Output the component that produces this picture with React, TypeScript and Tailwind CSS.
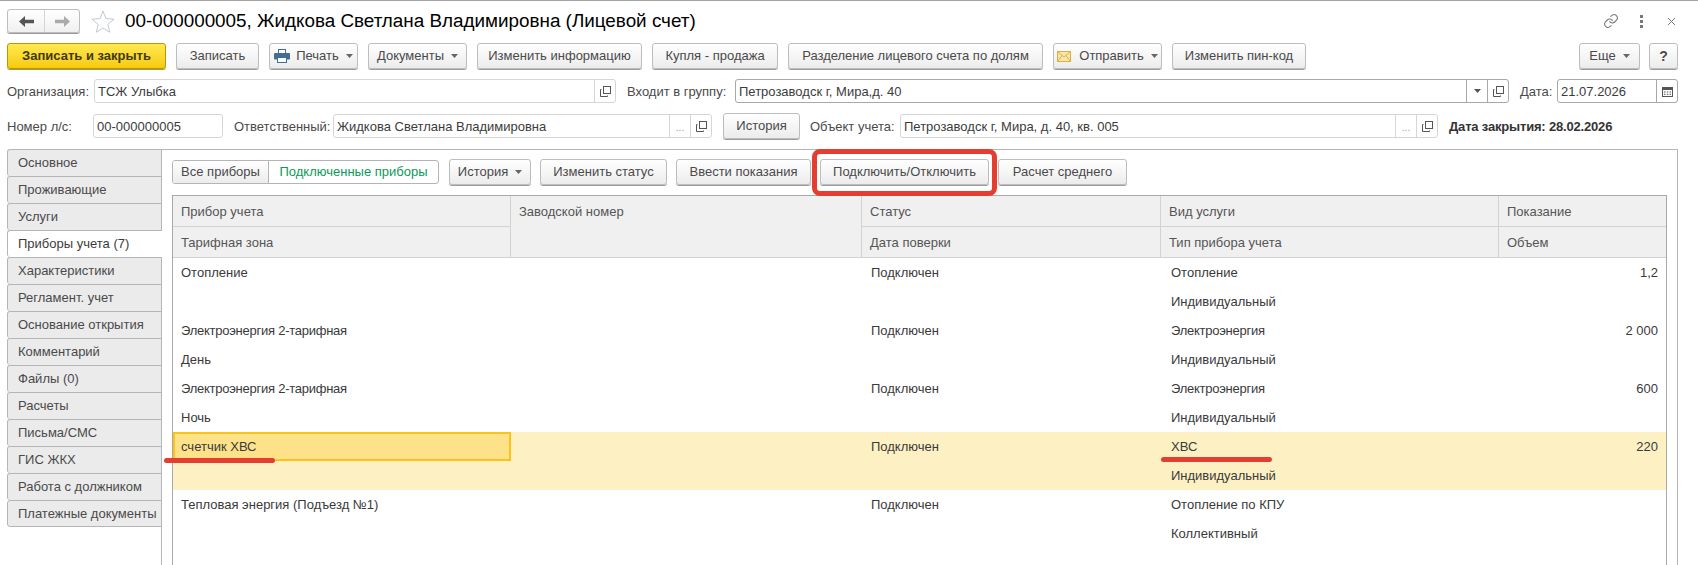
import type { ReactNode } from "react";

const TABS = [
  "Основное",
  "Проживающие",
  "Услуги",
  "Приборы учета (7)",
  "Характеристики",
  "Регламент. учет",
  "Основание открытия",
  "Комментарий",
  "Файлы (0)",
  "Расчеты",
  "Письма/СМС",
  "ГИС ЖКХ",
  "Работа с должником",
  "Платежные документы",
];

const ROWS = [
  { name: "Отопление", zone: "", status: "Подключен", service: "Отопление", type: "Индивидуальный", value: "1,2" },
  { name: "Электроэнергия 2-тарифная", zone: "День", status: "Подключен", service: "Электроэнергия", type: "Индивидуальный", value: "2 000" },
  { name: "Электроэнергия 2-тарифная", zone: "Ночь", status: "Подключен", service: "Электроэнергия", type: "Индивидуальный", value: "600" },
  { name: "счетчик ХВС", zone: "", status: "Подключен", service: "ХВС", type: "Индивидуальный", value: "220", selected: true },
  { name: "Тепловая энергия (Подъезд №1)", zone: "", status: "Подключен", service: "Отопление по КПУ", type: "Коллективный", value: "" },
];

const COLS = "grid grid-cols-[338px_351px_299px_338px_167px]";

function Caret() {
  return (
    <svg width="7" height="4" viewBox="0 0 7 4" className="ml-[7px] shrink-0">
      <path d="M0 0h7L3.5 4z" fill="#666" />
    </svg>
  );
}

function OpenIcon() {
  return (
    <svg width="11" height="11" viewBox="0 0 11 11" fill="none" stroke="#555">
      <rect x="3.5" y="0.5" width="7" height="7" fill="#fff" />
      <path d="M1.5 3.5h-1v7h7v-1" />
    </svg>
  );
}

function Btn({ w, children, className = "" }: { w: string; children: ReactNode; className?: string }) {
  return (
    <button
      className={`${w} h-[26px] shrink-0 flex items-center justify-center rounded-[3px] border border-[#bdbdbd] bg-gradient-to-b from-white to-[#ececec] text-[#4a4a4a] shadow-[0_1px_0_#9c9c9c] ${className}`}
    >
      {children}
    </button>
  );
}

function Field({
  w,
  value,
  dark,
  cells = [],
}: {
  w: string;
  value: string;
  dark?: boolean;
  cells?: ReactNode[];
}) {
  const border = dark ? "border-[#a8a8a8]" : "border-[#d6d6d6]";
  return (
    <div className={`${w} h-[24px] shrink-0 flex items-center rounded-[3px] border bg-white ${border}`}>
      <span className="flex-1 pl-[3px] pt-px text-[#3c3c3c] truncate">{value}</span>
      {cells.map((cell, i) => (
        <span key={i} className={`w-[21px] h-full flex items-center justify-center border-l ${border}`}>
          {cell}
        </span>
      ))}
    </div>
  );
}

const dots = <span className="text-[10px] text-[#999] leading-none pt-[4px]">...</span>;

export default function App() {
  return (
    <div
      className="relative w-[1698px] h-[565px] overflow-hidden bg-white border-t border-[#a3a3a3] text-[13px] text-[#4a4a4a]"
      style={{ fontFamily: '"Liberation Sans", Arial, sans-serif' }}
    >
      {/* title */}
      <div className="h-[40px] mb-[2px] pl-[7px] pr-[22px] flex items-center">
        <div className="w-[73px] h-[24px] flex rounded-[3px] border border-[#bdbdbd] bg-gradient-to-b from-white to-[#f0f0f0] shadow-[0_1px_0_#9c9c9c]">
          <span className="w-[37px] flex items-center justify-center border-r border-[#d5d5d5]">
            <svg width="15" height="11" viewBox="0 0 15 11">
              <path d="M0 5.5 6 0v3.8h9v3.4H6V11z" fill="#555" />
            </svg>
          </span>
          <span className="flex-1 flex items-center justify-center">
            <svg width="15" height="11" viewBox="0 0 15 11">
              <path d="M15 5.5 9 0v3.8H0v3.4h9V11z" fill="#aaa" />
            </svg>
          </span>
        </div>
        <svg width="24" height="23" viewBox="0 0 24 23" className="ml-[11px]" fill="#fff" stroke="#c4c8cc">
          <path d="M12 1l3 7.6 8 .6-6.2 5.2 2 7.9L12 18l-6.800 4.300 2-7.900L1 9.200l8-.6z" />
        </svg>
        <h1 className="ml-[10px] text-[18.85px] leading-none text-black">
          00-000000005, Жидкова Светлана Владимировна (Лицевой счет)
        </h1>
        <div className="ml-auto flex items-center">
          <svg width="16" height="16" viewBox="0 0 24 24" fill="none" stroke="#777" strokeWidth="1.600" strokeLinecap="round">
            <path d="M10 13a5 5 0 0 0 7.500.500l3-3a5 5 0 0 0-7-7l-1.700 1.700" />
            <path d="M14 11a5 5 0 0 0-7.500-.500l-3 3a5 5 0 0 0 7 7l1.700-1.700" />
          </svg>
          <span className="ml-[21px] flex flex-col gap-[2px]">
            <i className="block w-[3px] h-[3px] bg-[#777]" />
            <i className="block w-[3px] h-[3px] bg-[#777]" />
            <i className="block w-[3px] h-[3px] bg-[#777]" />
          </span>
          <svg width="9" height="9" viewBox="0 0 9 9" className="ml-[24px]" stroke="#777" strokeWidth="1">
            <path d="M1 1l7 7M8 1 1 8" />
          </svg>
        </div>
      </div>

      {/* toolbar */}
      <div className="pl-[7px] pr-[20px] flex gap-[10px]">
        <button className="w-[159px] h-[26px] shrink-0 rounded-[3px] border border-[#b59b00] bg-gradient-to-b from-[#ffe94d] to-[#f7ca00] font-bold text-[#3f3a17] shadow-[0_1px_0_#a89a4a]">
          Записать и закрыть
        </button>
        <Btn w="w-[83px]">Записать</Btn>
        <Btn w="w-[89px]">
          <svg width="16" height="14" viewBox="0 0 16 14" className="mr-[6px]">
            <rect x="4.500" y="0.500" width="7" height="4" fill="#fff" stroke="#3f6f95" />
            <rect x="0" y="4" width="16" height="6.500" rx="1" fill="#3f6f95" />
            <rect x="3.500" y="8.500" width="9" height="5" fill="#fff" stroke="#3f6f95" />
          </svg>
          Печать
          <Caret />
        </Btn>
        <Btn w="w-[99px]">
          Документы
          <Caret />
        </Btn>
        <Btn w="w-[165px]">Изменить информацию</Btn>
        <Btn w="w-[126px]">Купля - продажа</Btn>
        <Btn w="w-[255px]">Разделение лицевого счета по долям</Btn>
        <Btn w="w-[109px]">
          <svg width="14" height="11" viewBox="0 0 14 11" className="mr-[8px]">
            <rect x="0.500" y="0.500" width="13" height="10" fill="#fbe6a6" stroke="#d9ad4c" />
            <path d="M.5.5 7 6l6.500-5.500M.5 10.500 5 4.500M13.500 10.500 9 4.500" fill="none" stroke="#d9ad4c" />
          </svg>
          Отправить
          <Caret />
        </Btn>
        <Btn w="w-[134px]">Изменить пин-код</Btn>
        <Btn w="w-[61px] ml-auto">
          Еще
          <Caret />
        </Btn>
        <Btn w="w-[29px] -ml-px font-bold text-[14px]">?</Btn>
      </div>

      {/* fields */}
      <div className="mt-[10px] pl-[7px] flex items-center">
        <span className="w-[87px] shrink-0 pt-px">Организация:</span>
        <Field w="w-[522px]" value="ТСЖ Улыбка" cells={[<OpenIcon key="o" />]} />
        <span className="ml-[11px] w-[108px] shrink-0 pt-px">Входит в группу:</span>
        <Field
          w="w-[774px]"
          dark
          value="Петрозаводск г, Мира,д. 40"
          cells={[
            <svg key="c" width="7" height="4" viewBox="0 0 7 4">
              <path d="M0 0h7L3.500 4z" fill="#555" />
            </svg>,
            <OpenIcon key="o" />,
          ]}
        />
        <span className="ml-[11px] w-[37px] shrink-0 pt-px">Дата:</span>
        <Field
          w="w-[121px]"
          dark
          value="21.07.2026"
          cells={[
            <svg key="d" width="11" height="11" viewBox="0 0 11 11">
              <rect x="0.500" y="1.500" width="10" height="9" fill="#fff" stroke="#555" />
              <rect x="0" y="1" width="11" height="3" fill="#555" />
              <path d="M2 6h1.500M4.800 6h1.500M7.600 6h1.500M2 8.300h1.500M4.800 8.300h1.500M7.600 8.300h1.500" stroke="#555" />
            </svg>,
          ]}
        />
      </div>
      <div className="mt-[11px] pl-[7px] flex items-center">
        <span className="w-[86px] shrink-0 pt-px">Номер л/с:</span>
        <Field w="w-[130px]" value="00-000000005" />
        <span className="ml-[11px] w-[99px] shrink-0 pt-px">Ответственный:</span>
        <Field w="w-[379px]" value="Жидкова Светлана Владимировна" cells={[dots, <OpenIcon key="o" />]} />
        <Btn w="w-[77px] ml-[11px] -my-px">История</Btn>
        <span className="ml-[10px] w-[90px] shrink-0 pt-px">Объект учета:</span>
        <Field w="w-[538px]" value="Петрозаводск г, Мира, д. 40, кв. 005" cells={[dots, <OpenIcon key="o" />]} />
        <span className="ml-[11px] pt-px font-bold tracking-[-0.18px] text-[#333]">Дата закрытия: 28.02.2026</span>
      </div>

      {/* body */}
      <div className="mt-[11px] ml-[7px] mr-[20px] h-[500px] flex">
        <div className="w-[155px] shrink-0 relative z-10 -mr-px">
          {TABS.map((tab, i) => (
            <div
              key={tab}
              className={`h-[27px] pl-[10px] flex items-center border-l border-t border-[#b5b5b5] rounded-l-[3px] last:border-b ${
                i === 3 ? "bg-white text-[#3c3c3c]" : "bg-[#ebebeb] border-r"
              }`}
            >
              {tab}
            </div>
          ))}
        </div>
        <div className="flex-1 border border-[#b5b5b5] pl-[10px] pr-[10px] pt-[10px]">
          <div className="flex gap-[9px]">
            <div className="w-[267px] h-[24px] mr-px flex rounded-[3px] border border-[#b5b5b5] overflow-hidden">
              <span className="w-[96px] flex items-center justify-center border-r border-[#b5b5b5] bg-gradient-to-b from-white to-[#ececec]">
                Все приборы
              </span>
              <span className="flex-1 flex items-center justify-center text-[#0c9a5a]">Подключенные приборы</span>
            </div>
            <Btn w="w-[82px] -my-px">
              История
              <Caret />
            </Btn>
            <Btn w="w-[127px] -my-px">Изменить статус</Btn>
            <Btn w="w-[135px] -my-px">Ввести показания</Btn>
            <Btn w="w-[169px] -my-px">Подключить/Отключить</Btn>
            <Btn w="w-[129px] -my-px">Расчет среднего</Btn>
          </div>

          <div className="mt-[11px] w-[1495px] h-[400px] border-x border-t border-[#a9a9a9]">
            <div className={`${COLS} grid-rows-[31px_31px] bg-[#f0f0f0] border-b-0`}>
              <HeadCell>Прибор учета</HeadCell>
              <HeadCell span>Заводской номер</HeadCell>
              <HeadCell>Статус</HeadCell>
              <HeadCell>Вид услуги</HeadCell>
              <HeadCell last>Показание</HeadCell>
              <HeadCell>Тарифная зона</HeadCell>
              <HeadCell>Дата поверки</HeadCell>
              <HeadCell>Тип прибора учета</HeadCell>
              <HeadCell last>Объем</HeadCell>
            </div>
            {ROWS.map((row, i) => {
              const tight = row.service === "Электроэнергия" ? "tracking-[-0.25px]" : "";
              return (
                <div key={i} className={`${row.selected ? "bg-[#fdf1c4]" : ""} text-[#3a3a3a]`}>
                  <div className={`${COLS} h-[29px] items-center`}>
                    {row.selected ? (
                      <span className="h-[29px] pl-[6px] flex items-center border-2 border-[#fcc419] bg-[#fee28a]">{row.name}</span>
                    ) : (
                      <span className={`pl-[8px] ${tight}`}>{row.name}</span>
                    )}
                    <span />
                    <span className="pl-[9px]">{row.status}</span>
                    <span className={`pl-[10px] ${tight}`}>{row.service}</span>
                    <span className="pr-[8px] text-right">{row.value}</span>
                  </div>
                  <div className={`${COLS} h-[29px] items-center`}>
                    <span className="pl-[8px]">{row.zone}</span>
                    <span />
                    <span />
                    <span className="pl-[10px]">{row.type}</span>
                    <span />
                  </div>
                </div>
              );
            })}
          </div>
        </div>
      </div>

      {/* red annotations drawn over the screenshot */}
      <div className="absolute left-[812px] top-[148px] w-[185px] h-[47px] rounded-[8px] border-[5px] border-[#e53e30]" />
      <div className="absolute left-[164px] top-[457px] w-[111px] h-[5px] rounded-full bg-[#e53e30]" />
      <div className="absolute left-[1161px] top-[456px] w-[111px] h-[5px] rounded-full bg-[#e53e30]" />
    </div>
  );
}

function HeadCell({ children, span, last }: { children: ReactNode; span?: boolean; last?: boolean }) {
  return (
    <div
      className={`pl-[8px] pt-[8px] leading-[15px] text-[#555] border-[#d2d2d2] border-b shadow-[inset_0_0_0_1px_#f0f0f0] ${
        span ? "row-span-2" : ""
      } ${last ? "" : "border-r"}`}
    >
      {children}
    </div>
  );
}
